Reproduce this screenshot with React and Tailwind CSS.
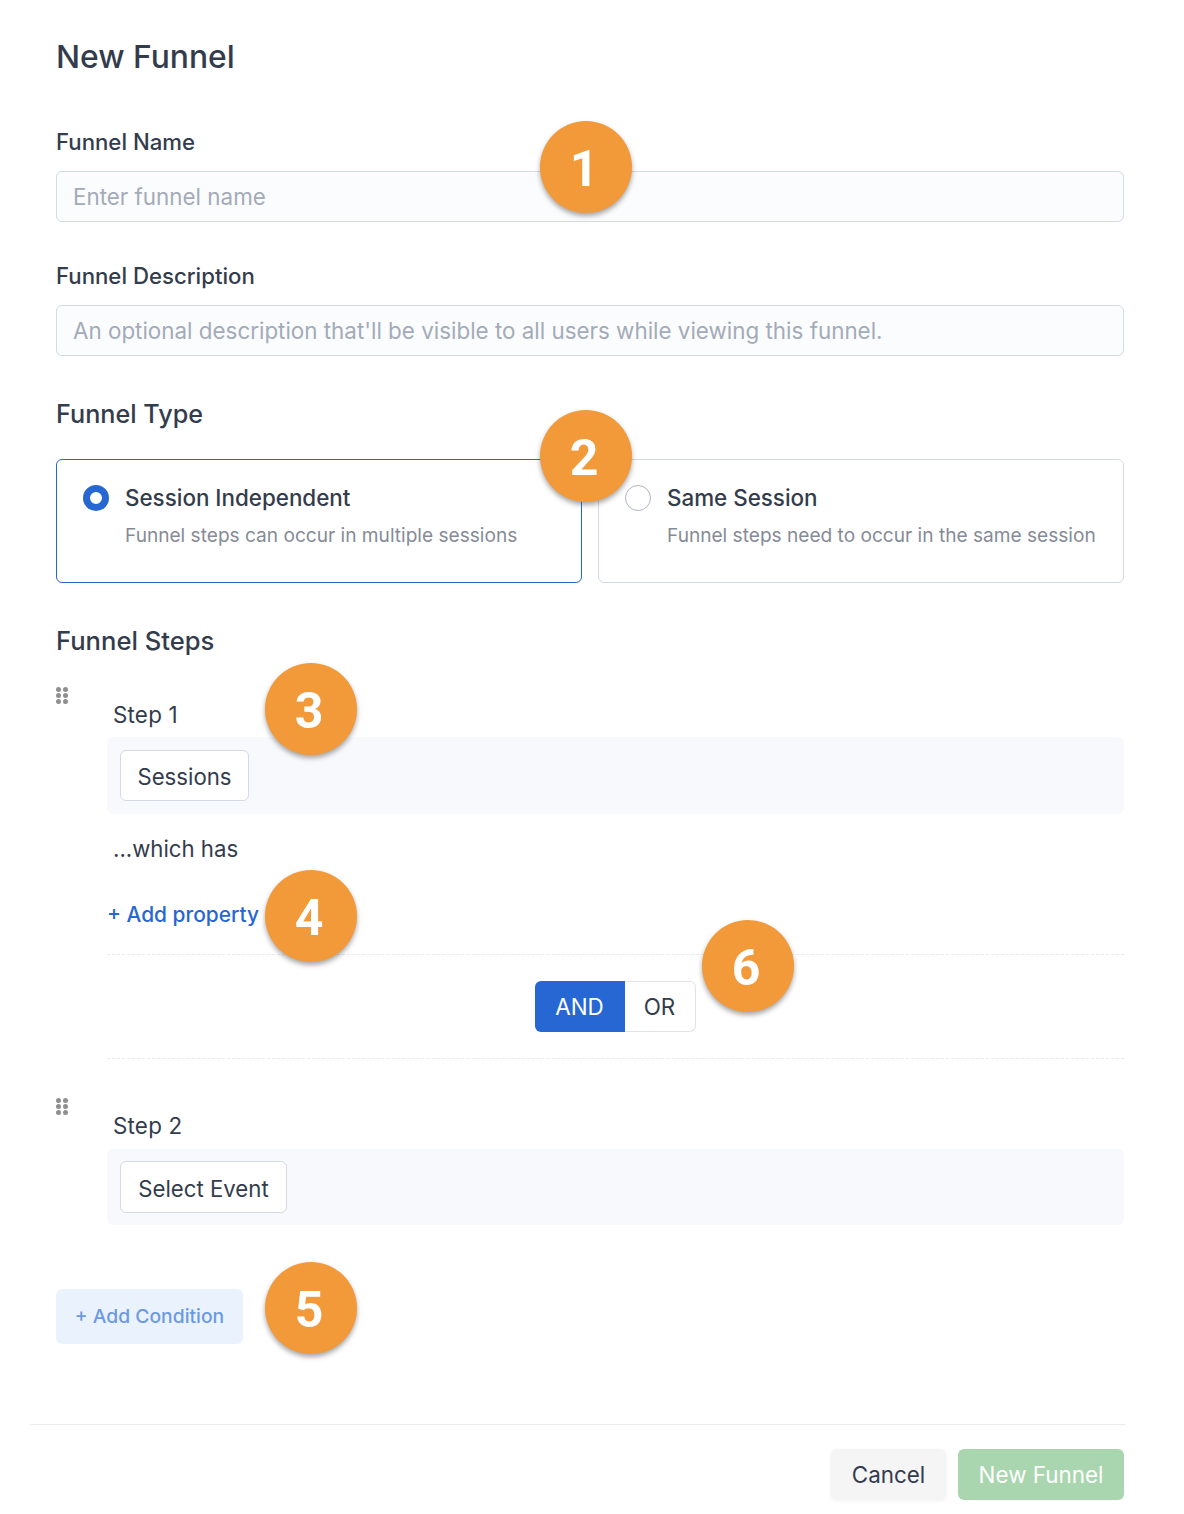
function Badge({ n, className }) {
  return (
    <div
      className={`absolute flex h-[92px] w-[92px] items-center justify-center rounded-full bg-[#f2993a] pr-[4px] pt-[4px] font-['Roboto',sans-serif] text-[50px] font-bold text-white shadow-[0_3px_5px_rgba(60,60,60,0.45)] ${className}`}
    >
      {n}
    </div>
  );
}

function Grip() {
  return (
    <div className="grid w-[12px] grid-cols-2 gap-x-[2px] gap-y-[1px]">
      {[0, 1, 2, 3, 4, 5].map((i) => (
        <span key={i} className="h-[5px] w-[5px] rounded-full bg-[#8f8f8f]" />
      ))}
    </div>
  );
}

function Field({ label, placeholder, className }) {
  return (
    <div className={className}>
      <div className="flex h-[28px] items-center text-[22.2px] font-medium text-[#333c4d]">{label}</div>
      <div className="mt-[15px] flex h-[51px] items-center rounded-[6px] border border-[#d3d9e6] bg-[#fbfcfe] px-[16px] text-[22.4px] text-[#a3abb8]">
        {placeholder}
      </div>
    </div>
  );
}

function TypeCard({ title, text, active }) {
  return (
    <div
      className={`flex h-[124px] flex-1 items-start gap-[16px] rounded-[6px] border bg-white pl-[26px] pt-[24px] ${
        active ? 'border-[#2767d3]' : 'border-[#d3d9e6]'
      }`}
    >
      {active ? (
        <span className="mt-[1px] h-[26px] w-[26px] shrink-0 rounded-full border-[7px] border-[#2767d3] bg-white" />
      ) : (
        <span className="mt-[1px] h-[26px] w-[26px] shrink-0 rounded-full border border-[#b0b6c2] bg-white" />
      )}
      <div>
        <div className="text-[22.4px] font-medium leading-[28px] text-[#333c4d]">{title}</div>
        <div className="mt-[10px] whitespace-nowrap text-[19.1px] leading-[27px] text-[#858b96]">{text}</div>
      </div>
    </div>
  );
}

function Step({ label, button, panelClass, buttonClass }) {
  return (
    <div className="flex">
      <div className="w-[51px] shrink-0 pt-[1px]">
        <Grip />
      </div>
      <div className="flex-1 pt-[15px]">
        <div className="pl-[6px] text-[22.4px] leading-[28px] tracking-[0.2px] text-[#333c4d]">{label}</div>
        <div className={`flex items-center rounded-[6px] bg-[#f8f9fd] pl-[13px] ${panelClass}`}>
          <div
            className={`flex items-center justify-center rounded-[6px] border border-[#d3d9e6] bg-white text-[22.2px] text-[#333c4d] ${buttonClass}`}
          >
            {button}
          </div>
        </div>
      </div>
    </div>
  );
}

export default function App() {
  return (
    <div className="relative h-[1514px] w-[1184px] overflow-hidden bg-white pt-[36px] font-['Inter',sans-serif]">
      <div className="pl-[56px] pr-[60px]">
        <h1 className="h-[42px] text-[31.8px] font-medium leading-[42px] text-[#333c4d]">New Funnel</h1>

        <Field className="mt-[50px]" label="Funnel Name" placeholder="Enter funnel name" />
        <Field
          className="mt-[40px]"
          label="Funnel Description"
          placeholder="An optional description that'll be visible to all users while viewing this funnel."
        />

        <h2 className="mt-[41px] h-[34px] text-[25.2px] font-medium leading-[34px] text-[#333c4d]">Funnel Type</h2>
        <div className="mt-[28px] flex gap-[16px]">
          <TypeCard active title="Session Independent" text="Funnel steps can occur in multiple sessions" />
          <TypeCard title="Same Session" text="Funnel steps need to occur in the same session" />
        </div>

        <h2 className="mt-[41px] h-[34px] text-[25.6px] font-medium leading-[34px] text-[#333c4d]">Funnel Steps</h2>

        <div className="mt-[28px]">
          <Step label="Step 1" button="Sessions" panelClass="mt-[8px] h-[77px]" buttonClass="h-[51px] w-[129px] pt-[2px]" />
          <div className="ml-[51px]">
            <div className="mt-[21px] pl-[6px] text-[22.2px] leading-[28px] text-[#333c4d]">...which has</div>
            <div className="mt-[38px] text-[20.9px] font-medium leading-[28px] text-[#2767d3]">+ Add property</div>
            <div className="mt-[25px] flex h-[105px] items-center justify-center border-y border-dashed border-[#e8e9ec] pr-[1px]">
              <div className="flex h-[51px] text-[22.4px]">
                <div className="flex w-[90px] items-center justify-center rounded-l-[6px] bg-[#2767d3] text-white">
                  AND
                </div>
                <div className="flex w-[71px] items-center justify-center rounded-r-[6px] border border-l-0 border-[#e1e3e8] bg-white text-[#333c4d]">
                  OR
                </div>
              </div>
            </div>
          </div>
        </div>

        <div className="mt-[38px]">
          <Step label="Step 2" button="Select Event" panelClass="mt-[9px] h-[76px]" buttonClass="h-[52px] w-[167px] pt-[3px]" />
        </div>

        <div className="mt-[64px] flex h-[55px] w-[187px] items-center justify-center rounded-[6px] bg-[#eaf3fd] text-[19.3px] font-medium text-[#6c99e3]">
          + Add Condition
        </div>
      </div>

      <div className="ml-[30px] mt-[80px] w-[1096px] border-t border-[#ebecef]" />

      <div className="mt-[24px] flex justify-end gap-[12px] pr-[60px] text-[22.4px]">
        <div className="flex h-[51px] w-[115px] items-center justify-center rounded-[6px] bg-[#f5f5f6] text-[#333c4d] shadow-[0_1px_4px_rgba(0,0,0,0.06)]">
          Cancel
        </div>
        <div className="flex h-[51px] w-[166px] items-center justify-center rounded-[6px] bg-[#a9d6ae] text-white">
          New Funnel
        </div>
      </div>

      <Badge n="1" className="left-[540px] top-[121px]" />
      <Badge n="2" className="left-[540px] top-[410px]" />
      <Badge n="3" className="left-[265px] top-[663px]" />
      <Badge n="4" className="left-[265px] top-[870px]" />
      <Badge n="5" className="left-[265px] top-[1262px]" />
      <Badge n="6" className="left-[702px] top-[920px]" />
    </div>
  );
}
